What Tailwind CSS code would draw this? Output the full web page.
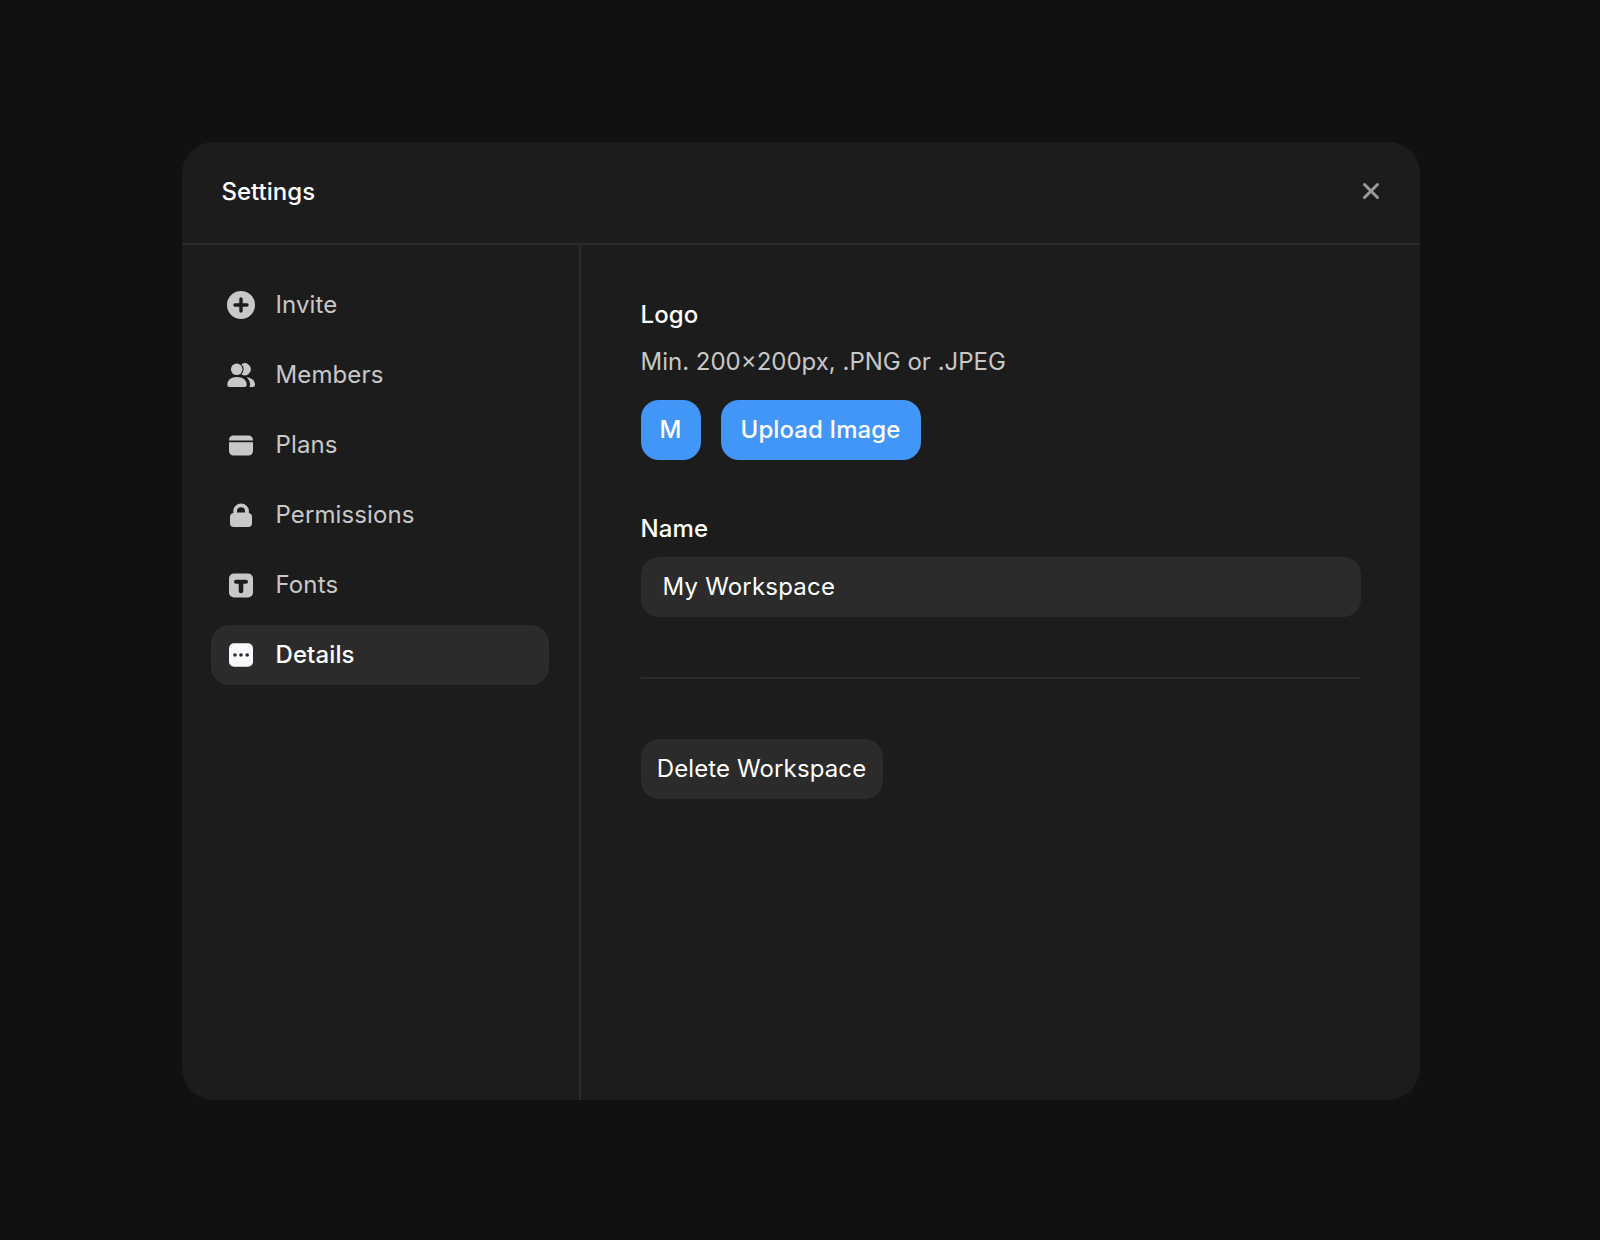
<!DOCTYPE html>
<html lang="en">
<head>
  <meta charset="UTF-8">
  <title>Settings</title>
  <script src="https://cdn.jsdelivr.net/npm/@tailwindcss/browser@4"></script>
</head>
<body class="bg-[#111111] min-h-screen font-['Inter',sans-serif]">
  <div class="h-[1240px] flex items-center justify-center pl-[1px] pt-[1px]">
    <div class="w-[1238px] h-[958px] bg-[#1c1c1c] rounded-[32px] flex flex-col overflow-hidden">
      <header class="h-[103px] shrink-0 border-b-2 border-[#2b2b2b] flex items-center justify-between pl-[40px] pr-[37px]">
        <h1 class="text-[24px] font-medium text-white">Settings</h1>
        <button class="text-[#9a9a9a] mb-[2px]">
          <svg class="w-6 h-6" viewBox="0 0 24 24" fill="none" stroke="currentColor" stroke-width="3" stroke-linecap="round"><path d="M5.500 5.500l13 13M18.500 5.500l-13 13"/></svg>
        </button>
      </header>
      <div class="flex flex-1">
        <nav class="w-[399px] shrink-0 border-r-2 border-[#2b2b2b] pt-[30px] pl-[29px] pr-[30px] flex flex-col gap-[10px] text-[24px] tracking-[0.12px] text-[#c8c8c8]">
          <a class="h-[60px] flex items-center gap-[21px] pl-4 rounded-[18px]">
            <svg class="w-7 h-7" viewBox="0 0 28 28"><path fill="currentColor" fill-rule="evenodd" d="M14 0a14 14 0 1 1 0 28a14 14 0 0 1 0-28zM12.300 8v4.300H8a1.700 1.700 0 0 0 0 3.400h4.300V20a1.700 1.700 0 0 0 3.400 0v-4.300H20a1.700 1.700 0 0 0 0-3.400h-4.300V8a1.700 1.700 0 0 0-3.400 0z"/></svg>
            <span>Invite</span>
          </a>
          <a class="h-[60px] flex items-center gap-[21px] pl-4 rounded-[18px]">
            <svg class="w-7 h-7" viewBox="0 0 28 28" fill="currentColor"><circle cx="9.700" cy="8.300" r="5.800"/><path d="M0.300 23.500c0-4.500 4-7.500 9.700-7.500s9.700 3 9.700 7.500c0 1.700-.8 2.500-2.200 2.500H2.500c-1.400 0-2.200-.8-2.200-2.500z"/><path d="M14.430 3.270A6 6 0 1 1 14.430 13.330A6.900 6.900 0 0 0 14.430 3.270z"/><path d="M19.500 16.200c5 .4 8.500 3.200 8.500 7.300c0 1.700-.8 2.500-2.200 2.500h-3.400c.5-.8.700-1.600.7-2.500c0-2.900-1.300-5.400-3.600-7.300z"/></svg>
            <span>Members</span>
          </a>
          <a class="h-[60px] flex items-center gap-[21px] pl-4 rounded-[18px]">
            <svg class="w-7 h-7" viewBox="0 0 28 28" fill="currentColor"><path d="M2 9a4.500 4.500 0 0 1 4.500-4.500h15A4.500 4.500 0 0 1 26 9v.5H2z"/><path d="M2 11.200h24V20a4.500 4.500 0 0 1-4.500 4.500h-15A4.500 4.500 0 0 1 2 20z"/></svg>
            <span>Plans</span>
          </a>
          <a class="h-[60px] flex items-center gap-[21px] pl-4 rounded-[18px]">
            <svg class="w-7 h-7" viewBox="0 0 28 28" fill="currentColor"><path fill-rule="evenodd" d="M6.300 12V10.200a7.800 7.800 0 0 1 15.600 0V12a3.800 3.800 0 0 1 3.100 3.700v6.500a3.800 3.800 0 0 1-3.800 3.800H6.800A3.800 3.800 0 0 1 3 22.200v-6.500A3.800 3.800 0 0 1 6.300 12zm3.700-.6h8v-1.200a4 4 0 0 0-8 0z"/></svg>
            <span>Permissions</span>
          </a>
          <a class="h-[60px] flex items-center gap-[21px] pl-4 rounded-[18px]">
            <svg class="w-7 h-7" viewBox="0 0 28 28"><path fill="currentColor" fill-rule="evenodd" d="M7 2.500h14a5 5 0 0 1 5 5v14a5 5 0 0 1-5 5H7a5 5 0 0 1-5-5v-14a5 5 0 0 1 5-5zM9 8.800a2 2 0 0 0 0 4h2.700V20a2.300 2.300 0 0 0 4.600 0v-7.200H19a2 2 0 0 0 0-4z"/></svg>
            <span>Fonts</span>
          </a>
          <a class="h-[60px] flex items-center gap-[21px] pl-4 rounded-[18px] bg-[#2b2b2b] text-white font-medium tracking-[0.1px]">
            <svg class="w-7 h-7" viewBox="0 0 28 28"><path fill="#f8f9fc" fill-rule="evenodd" d="M7 2.300h14a5 5 0 0 1 5 5v13.400a5 5 0 0 1-5 5H7a5 5 0 0 1-5-5V7.300a5 5 0 0 1 5-5zM8 12.200a1.800 1.800 0 1 0 0 3.600a1.800 1.800 0 0 0 0-3.600zm6 0a1.800 1.800 0 1 0 0 3.600a1.800 1.800 0 0 0 0-3.600zm6.200 0a1.800 1.800 0 1 0 0 3.600a1.800 1.800 0 0 0 0-3.600z"/></svg>
            <span>Details</span>
          </a>
        </nav>
        <main class="flex-1 pt-[54px] pl-[60px] pr-[59px]">
          <h2 class="text-[24px] leading-[32px] font-medium tracking-[0.1px] text-white">Logo</h2>
          <p class="mt-[15px] text-[24px] leading-[32px] text-[#c8c8c8]">Min. 200×200px, .PNG or .JPEG</p>
          <div class="mt-[22px] flex gap-[20px] text-[24px] font-medium tracking-[0.1px] text-white">
            <div class="w-[60px] h-[60px] rounded-[18px] bg-[#4296f7] flex items-center justify-center">M</div>
            <button class="w-[200px] h-[60px] rounded-[18px] bg-[#4296f7]">Upload Image</button>
          </div>
          <h2 class="mt-[53px] text-[24px] leading-[32px] font-medium tracking-[0.1px] text-white">Name</h2>
          <div class="mt-[12px] h-[60px] rounded-[18px] bg-[#2b2b2b] px-[22px] flex items-center text-[24px] tracking-[0.2px] text-white">My Workspace</div>
          <div class="mt-[60px] border-t-2 border-[#2b2b2b]"></div>
          <button class="mt-[60px] h-[60px] w-[242px] rounded-[18px] bg-[#2b2b2b] text-[24px] tracking-[0.12px] text-white">Delete Workspace</button>
        </main>
      </div>
    </div>
  </div>
</body>
</html>
